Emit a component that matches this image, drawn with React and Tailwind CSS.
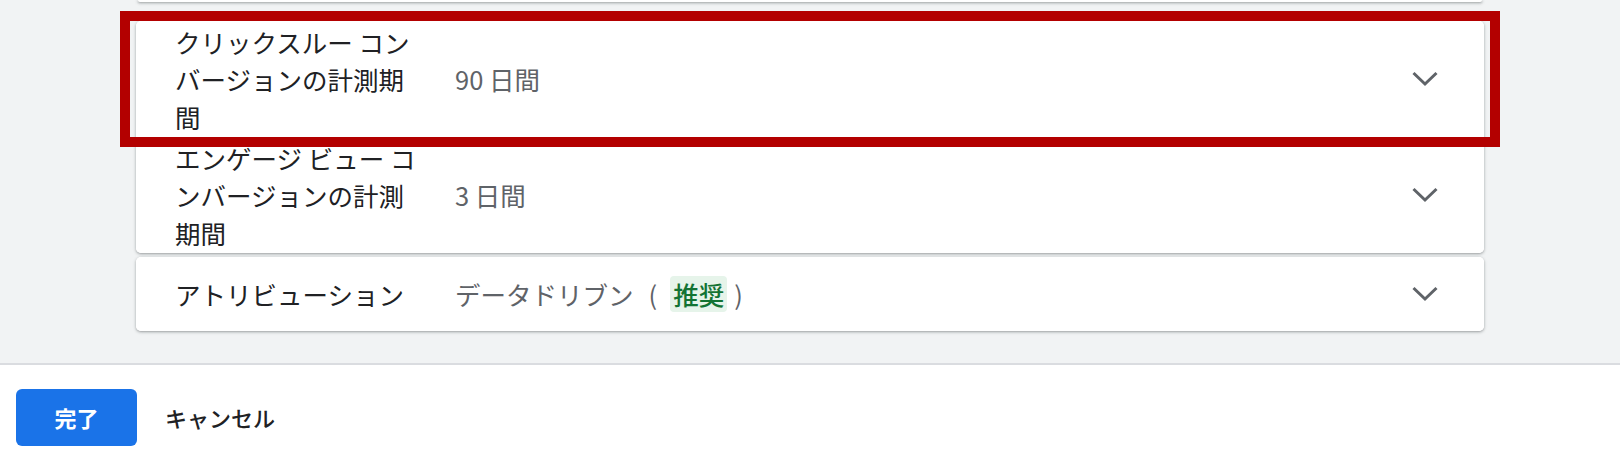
import React from "react";

const font = { fontFamily: '"Noto Sans CJK JP", "Noto Sans", Roboto, sans-serif' };

function Chevron() {
  return (
    <svg width="26" height="16" viewBox="0 0 26 16" className="shrink-0 mr-[46px]">
      <polyline points="1.5,2 13,13 24.5,2" fill="none" stroke="#5f6368" strokeWidth="3" strokeLinecap="butt" strokeLinejoin="miter" />
    </svg>
  );
}

function Row({ label, value, className }) {
  return (
    <div className={"flex items-center bg-white " + className}>
      <div className="w-[246px] shrink-0 ml-[39px] text-[25.5px] leading-[37.5px] text-[#202124]">{label}</div>
      <div className="ml-[34px] flex-1 text-[25.5px] leading-[37.5px] text-[#5f6368] flex items-center">{value}</div>
      <Chevron />
    </div>
  );
}

export default function App() {
  return (
    <div className="w-[1620px] h-[476px] bg-white relative overflow-hidden" style={font}>
      <div className="h-[363px] bg-[#f1f3f4] flex flex-col">
        <div className="ml-[138px] w-[1344px] h-[2px] bg-white rounded-b-[4px] shadow-[0_1px_2px_rgba(60,64,67,0.3),0_1px_3px_1px_rgba(60,64,67,0.15)]" />
        <div className="mt-[19px] ml-[136px] w-[1348px] flex flex-col">
          <div className="rounded-[5px] shadow-[0_1px_2px_rgba(60,64,67,0.3),0_1px_3px_1px_rgba(60,64,67,0.15)] bg-white">
            <Row
              className="h-[116px] rounded-t-[5px]"
              label="クリックスルー コンバージョンの計測期間"
              value="90 日間"
            />
            <Row
              className="h-[116px] rounded-b-[5px]"
              label="エンゲージ ビュー コンバージョンの計測期間"
              value="3 日間"
            />
          </div>
          <div className="mt-[4px] rounded-[5px] shadow-[0_1px_2px_rgba(60,64,67,0.3),0_1px_3px_1px_rgba(60,64,67,0.15)] bg-white">
            <Row
              className="h-[74px] rounded-[5px]"
              label="アトリビューション"
              value={
                <>
                  <span>データドリブン</span>
                  <span className="ml-[15px] mr-[13px]">(</span>
                  <span className="bg-[#e6f4ea] text-[#137333] rounded-[4px] px-[3px] leading-[36px] font-medium">推奨</span>
                  <span className="ml-[7px]">)</span>
                </>
              }
            />
          </div>
        </div>
      </div>
      <div className="border-t-[2px] border-[#dadce0] pt-[24px] pl-[16px] flex items-center">
        <button className="w-[121px] h-[57px] rounded-[6px] bg-[#1a73e8] text-white text-[22px] font-bold flex items-center justify-center">
          完了
        </button>
        <span className="ml-[28px] text-[22px] font-medium text-[#202124]">キャンセル</span>
      </div>
      <div className="absolute left-[120px] top-[11px] w-[1380px] h-[136px] border-[10px] border-[#b30000] pointer-events-none" />
    </div>
  );
}
